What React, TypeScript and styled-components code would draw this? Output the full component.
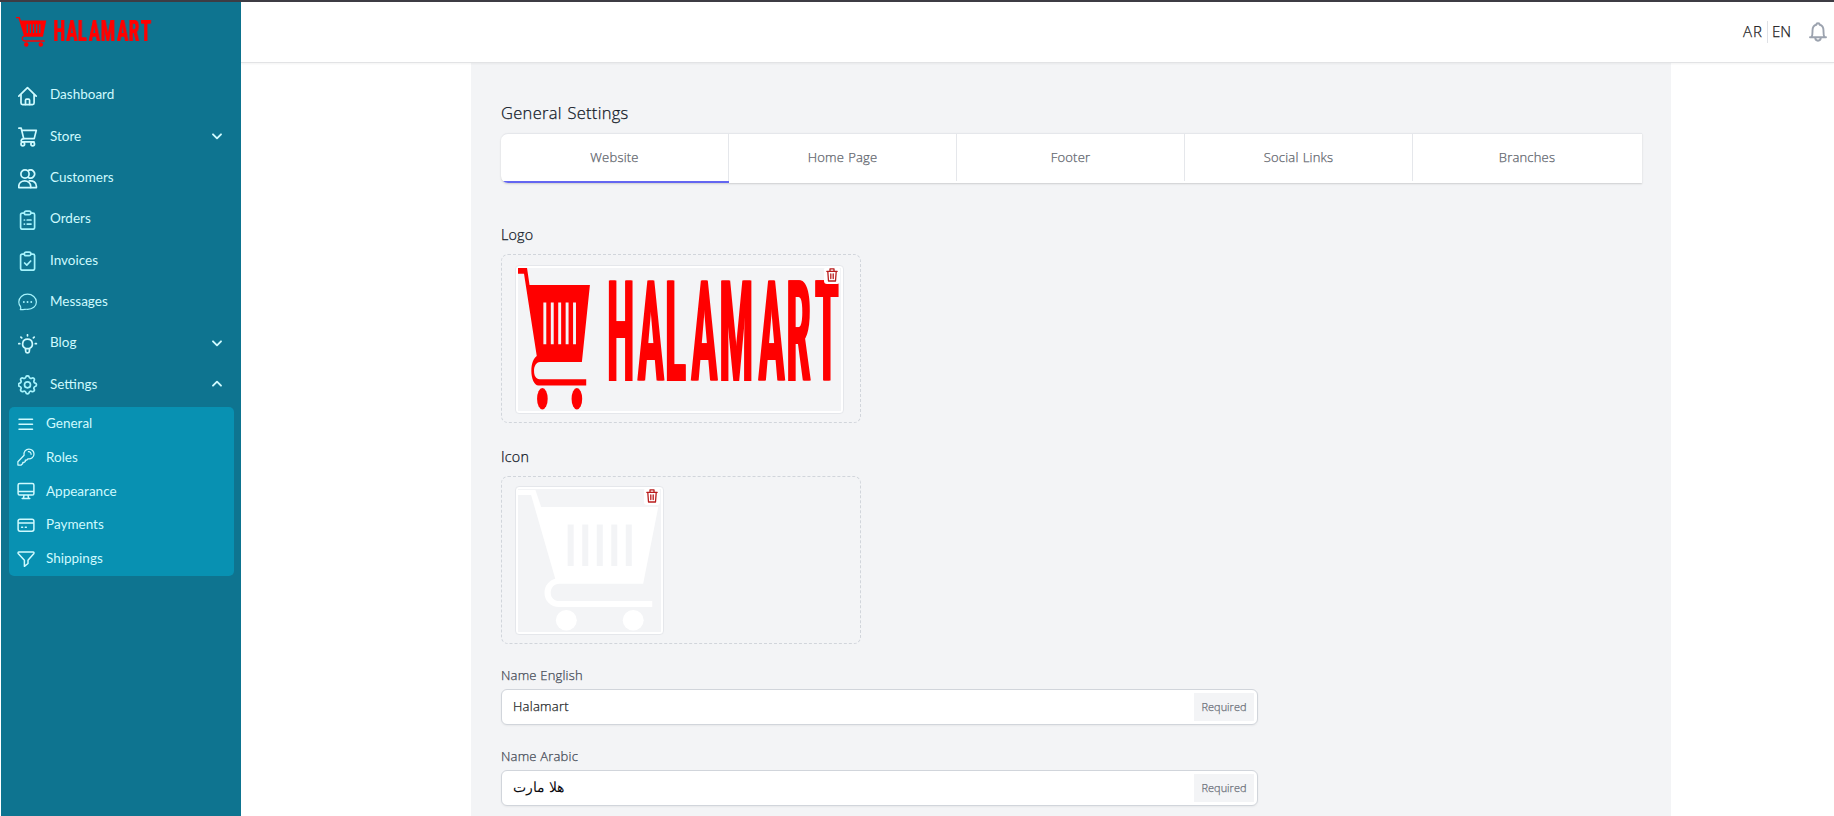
import React from "react";
import styled, { createGlobalStyle } from "styled-components";

const GlobalStyle = createGlobalStyle`
  * { box-sizing: border-box; }
  body {
    margin: 0;
    background: #fff;
    color: #111827;
    font-family: Lato, "Open Sans", sans-serif;
    overflow: hidden;
  }
`;

/* ---------- layout ---------- */

const Page = styled.div`
  height: 816px;
  display: flex;
  flex-direction: column;
  border-top: 2px solid #3d3c44;
  overflow: hidden;
`;

const Shell = styled.div`
  flex: 1;
  min-height: 0;
  display: flex;
  padding-left: 1px;
`;

const Sidebar = styled.aside`
  width: 240px;
  flex: none;
  background: #0e7490;
  color: #cffafe;
`;

const Brand = styled.div`
  height: 72.3px;
  padding: 15px 0 0 15px;
`;

const NavRow = styled.div`
  height: 41.3px;
  padding: 0 14.5px 0 17px;
  display: flex;
  align-items: center;
  font-size: 13.5px;
`;

const NavIcon = styled.svg<{ $soft?: boolean }>`
  width: 20px;
  height: 20px;
  flex: none;
  margin: 2px 12px 0 0;
  fill: none;
  stroke: ${(p) => (p.$soft ? "#a5f3fc" : "#cffafe")};
  stroke-width: 1.7;
  stroke-linecap: round;
  stroke-linejoin: round;
`;

const NavLabel = styled.span`
  flex: 1;
  line-height: 20px;
  margin-bottom: 1px;
`;

const Chevron = styled.svg<{ $up?: boolean }>`
  width: 20px;
  height: 20px;
  fill: none;
  stroke: #cffafe;
  stroke-width: 1.9;
  stroke-linecap: round;
  stroke-linejoin: round;
  transform: ${(p) => (p.$up ? "rotate(180deg)" : "none")};
`;

const SubMenu = styled.div`
  margin: 2px 7px 0 8px;
  padding-bottom: 1px;
  background: #0891b2;
  border-radius: 5px;
`;

const SubRow = styled.div`
  height: 33.75px;
  padding-left: 7.5px;
  display: flex;
  align-items: center;
  font-size: 13.5px;
`;

const SubIcon = styled(NavIcon)`
  width: 18px;
  height: 18px;
  margin: 0 11.5px 0 0;
  stroke-width: 1.5;
`;

const Main = styled.div`
  flex: 1;
  min-width: 0;
  display: flex;
  flex-direction: column;
  font-family: "Open Sans", sans-serif;
  font-weight: 300;
  -webkit-text-stroke: 0.25px currentColor;
`;

const Header = styled.header`
  height: 60.5px;
  flex: none;
  display: flex;
  align-items: center;
  justify-content: flex-end;
  padding-right: 6px;
  border-bottom: 1px solid #e2e3e5;
  box-shadow: 0 1px 2px rgba(0, 0, 0, 0.05);
  background: #fff;
  position: relative;
`;

const Lang = styled.span<{ $first?: boolean }>`
  height: 22px;
  line-height: 20px;
  font-size: 15px;
  letter-spacing: ${(p) => (p.$first ? "1px" : "0")};
  color: #18181b;
  padding: ${(p) => (p.$first ? "0 4px 0 0" : "0 0 0 4px")};
  border-right: ${(p) => (p.$first ? "1px solid #e0e2e6" : "none")};
`;

const BellIcon = styled.svg`
  width: 20px;
  height: 22px;
  margin-left: 17px;
  fill: none;
  stroke: #9ca3af;
  stroke-width: 1.9;
  stroke-linecap: round;
  stroke-linejoin: round;
`;

const Content = styled.main`
  width: 1200px;
  flex: 1;
  margin-left: 230px;
  padding: 39px 30px 0;
  background: #f3f4f6;
`;

const Title = styled.h1`
  margin: 0 0 9px;
  font-size: 16.5px;
  line-height: 22px;
  font-weight: 300;
  letter-spacing: 0.3px;
  word-spacing: 1px;
`;

const Tabs = styled.div`
  height: 50px;
  width: 1141px;
  display: grid;
  grid-template-columns: repeat(4, 228px) 1fr;
  background: #fff;
  border-top: 1px solid #e5e7eb;
  border-radius: 7px 0 0 7px;
  box-shadow: 0 1px 2px rgba(0, 0, 0, 0.16);
  overflow: hidden;
`;

const Tab = styled.div<{ $active?: boolean }>`
  display: flex;
  align-items: center;
  justify-content: center;
  padding-right: 1px;
  color: #60646c;
  font-size: 13px;
  letter-spacing: 0.2px;
  word-spacing: 0.5px;
  border-bottom: 2px solid ${(p) => (p.$active ? "#6366f1" : "transparent")};
  &:not(:last-child) { box-shadow: inset -1px 0 0 #e5e7eb; }
`;

const SectionLabel = styled.h2<{ $gap: number }>`
  margin: ${(p) => p.$gap}px 0 9px;
  font-size: 14.3px;
  line-height: 20px;
  font-weight: 300;
  letter-spacing: 0.2px;
`;

const DropZone = styled.div<{ $short?: boolean }>`
  width: 360px;
  height: ${(p) => (p.$short ? "168px" : "169px")};
  padding: ${(p) => (p.$short ? "9px" : "10px")} 12.5px;
  border: 1px dashed #d1d5db;
  border-radius: 7px;
`;

const Preview = styled.div<{ $wide?: boolean }>`
  position: relative;
  width: ${(p) => (p.$wide ? "329px" : "149px")};
  height: 149px;
  padding: 2px;
  background: #fff;
  border: 1px solid #e5e7eb;
  border-radius: 4px;
`;

const Picture = styled.div`
  width: 100%;
  height: 100%;
  background: #f3f4f6;
  svg { display: block; overflow: visible; }
`;

const DeleteButton = styled.button<{ $right: number }>`
  position: absolute;
  top: 1px;
  right: ${(p) => p.$right}px;
  width: 16px;
  height: 17px;
  padding: 0 0 0 2px;
  border: 0;
  border-radius: 3px;
  background: #fff;
  svg {
    display: block;
    width: 12px;
    height: 14px;
    fill: none;
    stroke: #b91c1c;
    stroke-width: 1.3;
    stroke-linejoin: round;
    stroke-linecap: round;
  }
`;

const Field = styled.label<{ $gap: number }>`
  display: block;
  width: 757px;
  margin-top: ${(p) => p.$gap}px;
  font-size: 13px;
  line-height: 18px;
  letter-spacing: 0.2px;
  color: #434955;
`;

const InputBox = styled.div`
  height: 36px;
  margin-top: 5px;
  padding: 0 3px 0 11px;
  display: flex;
  align-items: center;
  background: #fff;
  border: 1px solid #d1d5db;
  border-radius: 6px;
  box-shadow: 0 1px 2px rgba(0, 0, 0, 0.05);
`;

const Value = styled.span<{ $arabic?: boolean }>`
  flex: 1;
  margin-bottom: 1px;
  color: ${(p) => (p.$arabic ? "#0b0b10" : "#1c1f26")};
  font-family: ${(p) => (p.$arabic ? '"DejaVu Sans", sans-serif' : "inherit")};
  font-size: ${(p) => (p.$arabic ? "13.8px" : "13px")};
  letter-spacing: ${(p) => (p.$arabic ? "0" : "0.25px")};
  -webkit-text-stroke: ${(p) => (p.$arabic ? "0" : "0.25px currentColor")};
`;

const Required = styled.span`
  width: 60px;
  height: 28px;
  display: flex;
  align-items: center;
  justify-content: center;
  background: #f3f4f6;
  color: #6b7079;
  font-size: 11px;
  letter-spacing: 0;
`;

/* ---------- drawings ---------- */

const LogoArt = ({ width, height }: { width: number; height: number }) => (
  <svg width={width} height={height} viewBox="0 0 322 144" preserveAspectRatio="none" overflow="visible" fill="#f00">
    <path
      fillRule="evenodd"
      d="M0 0H9L11.5 17H71.7L63.7 94.7H22C18 95 16 99 16 103.7S18 112 21.500 112H68V118.300H20.500C16 118.300 13.300 111 13.300 103.700C13.300 96 15.500 91 18.700 88.700L6 5.700H0Z
      M25.300 34.700V76.700H28.200V34.700Z M32.700 34.700V76.700H35.600V34.700Z M40.100 34.700V76.700H43V34.700Z M47.500 34.700V76.700H50.400V34.700Z M54.900 34.700V76.700H57.800V34.700Z"
    />
    <ellipse cx="24.3" cy="131.700" rx="5.300" ry="10.800" />
    <ellipse cx="58.700" cy="131.700" rx="5.300" ry="10.800" />
    <g filter="drop-shadow(1.2px 0 0 #f00)">
      <text
        transform="scale(.32 1)"
        y="113.700"
        x="275 370 456 537 625 746 833 922"
        fontFamily="'Roboto Condensed', Roboto, sans-serif"
        fontWeight="700"
        fontSize="142"
        stroke="none"
      >
        HALAMART
      </text>
    </g>
  </svg>
);

const CartArt = () => (
  <svg width="143" height="143" viewBox="0 0 142 143.500" preserveAspectRatio="none" fill="#fff">
    <path
      fillRule="evenodd"
      d="M0 1H17.300L23 18H139.300L124.300 95H41C36 95 32.500 99 32.500 104S36 112.500 41 112.500H133.300V118.300H41C32 118.300 26.300 112 26.300 104C26.300 97 31 91.500 37 90L13 6H0Z
      M49.300 35.700V77.300H55.300V35.700Z M63.800 35.700V77.300H69.800V35.700Z M78.200 35.700V77.300H84.200V35.700Z M92.600 35.700V77.300H98.600V35.700Z M107 35.700V77.300H113V35.700Z"
    />
    <circle cx="48" cy="131.700" r="10.400" />
    <circle cx="114.400" cy="131.700" r="10.400" />
  </svg>
);

const TrashArt = () => (
  <svg viewBox="0 0 12 14">
    <path d="M.8 3.300H11.200M4 3.200V.8H8V3.200M1.800 3.500L2.500 13H9.500L10.200 3.500M4.800 5.800V10.600M7.200 5.800V10.600" />
  </svg>
);

const clipboard = (
  <>
    <path d="M6.300 3.200H4.200Q2.600 3.200 2.600 4.800V17.600Q2.600 19.200 4.200 19.200H15Q16.600 19.200 16.600 17.600V4.800Q16.600 3.200 15 3.200H12.900" />
    <rect x="6.300" y="1.200" width="6.600" height="3.500" rx="1.700" />
  </>
);

const icons: Record<string, React.ReactNode> = {
  home: (
    <>
      <path d="M.8 10.200L9.500 1.600L18.200 10.200" />
      <path d="M3 8.800V17Q3 18.600 4.600 18.600H14.500Q16.100 18.600 16.100 17V8.800" />
      <path d="M7.500 18.400V14.300Q7.500 13.200 8.600 13.200H10.500Q11.600 13.200 11.600 14.300V18.400" />
    </>
  ),
  cart: (
    <>
      <path d="M.8 1.200H3.200L5.700 11.600H16.200L18.300 3.400H3.900" />
      <path d="M5.600 11.600C2.800 12 2.200 14.900 4.800 14.900H16" />
      <circle cx="4.800" cy="17" r="1.800" />
      <circle cx="14.700" cy="17" r="1.800" />
    </>
  ),
  users: (
    <>
      <circle cx="7" cy="5" r="4.100" />
      <path d="M10.300 1.500A4.100 4.100 0 1 1 10.300 8.500" />
      <path d="M.8 18.600V17.200C.8 14 3.500 11.800 6.700 11.800S12.700 14 12.700 17.200V18.600Z" />
      <path d="M11.300 11.900C15.300 11.200 18.400 13.800 18.400 17.200V18.600H12.900" />
    </>
  ),
  orders: (
    <>
      {clipboard}
      <path d="M6.300 10H6.500M9.200 10H13M6.300 14.100H6.500M9.200 14.100H13" />
    </>
  ),
  invoices: (
    <>
      {clipboard}
      <path d="M6.600 12L8.800 14.200L12.700 10" />
    </>
  ),
  messages: (
    <>
      <path
        strokeWidth="1.200"
        d="M2.300 17.600C3 16.500 3 15.600 2.500 14.500C1.400 13.200.8 11.700.8 10C.8 5.600 4.700 2.200 9.500 2.200S18.400 5.600 18.400 10S14.500 17.300 9.500 17.300C7.400 17 6 17.800 2.300 17.600Z"
      />
      <path strokeWidth="1.800" d="M5.800 10H5.900M9.500 10H9.600M13.200 10H13.300" />
    </>
  ),
  blog: (
    <>
      <path d="M7.300 14.200C3.200 12.400 3.800 5.200 9.500 5.200S15.800 12.400 11.700 14.200L11.200 17.800Q11 18.900 9.500 18.900T7.800 17.800ZM7.500 14.700H11.500" />
      <path d="M9.500 .8V1.800M.7 9.700H1.800M17.300 9.700H18.400M2.900 3.100L3.700 3.900M16.200 3.100L15.400 3.900" />
    </>
  ),
  settings: (
    <path
      transform="translate(-2.500 -2.200)"
      d="M10.325 4.317c.426-1.756 2.924-1.756 3.350 0a1.724 1.724 0 002.573 1.066c1.543-.94 3.310.826 2.370 2.370a1.724 1.724 0 001.065 2.572c1.756.426 1.756 2.924 0 3.350a1.724 1.724 0 00-1.066 2.573c.94 1.543-.826 3.310-2.370 2.370a1.724 1.724 0 00-2.572 1.065c-.426 1.756-2.924 1.756-3.350 0a1.724 1.724 0 00-2.573-1.066c-1.543.94-3.310-.826-2.370-2.370a1.724 1.724 0 00-1.065-2.572c-1.756-.426-1.756-2.924 0-3.350a1.724 1.724 0 001.066-2.573c-.94-1.543.826-3.310 2.370-2.370.996.608 2.296.07 2.572-1.065zM15 12a3 3 0 11-6 0 3 3 0 016 0z"
    />
  ),
  general: <path d="M2 4.200H15.500M2 9.200H15.500M2 14.200H15.500" />,
  roles: (
    <path
      strokeWidth="1.250"
      d="M7.100 7.300C6.400 3.800 8.700 1 11.900 1C14.800 1 17 3.300 17 6C17 9.300 14.200 11.400 10.900 10.800L9.800 12H8.300V13.500L7.200 14.300H5.800V15.500L4.200 17H.9V13.700ZM11.400 3.600C13 3.400 14.200 4.800 14.100 6.300"
    />
  ),
  appearance: (
    <path d="M2.700 1.500H15.300Q16.900 1.500 16.900 3.100V11.400Q16.900 13 15.300 13H2.700Q1.100 13 1.100 11.400V3.100Q1.100 1.500 2.700 1.500ZM1.100 9.600H16.900M7 13.200L6.500 16.200M11 13.200L11.500 16.200M5.200 16.500H12.800" />
  ),
  payments: (
    <path d="M3 3.200H15Q16.900 3.200 16.900 5.100V13.300Q16.900 15.200 15 15.200H3Q1.100 15.200 1.100 13.300V5.100Q1.100 3.200 3 3.200ZM1.100 7.100H16.900M4.600 11.300H5.600M8.300 11.300H9.300" />
  ),
  shippings: <path d="M2 2H16C17.100 2 17.200 3 16.700 3.700L11 10.200V13.500L7.400 16.300V10.200L1.400 3.700C.8 3 .9 2 2 2Z" />,
};

type NavEntry = { label: string; icon: string; soft?: boolean; menu?: "down" | "up" };

const nav: NavEntry[] = [
  { label: "Dashboard", icon: "home" },
  { label: "Store", icon: "cart", menu: "down" },
  { label: "Customers", icon: "users" },
  { label: "Orders", icon: "orders", soft: true },
  { label: "Invoices", icon: "invoices", soft: true },
  { label: "Messages", icon: "messages", soft: true },
  { label: "Blog", icon: "blog", menu: "down" },
  { label: "Settings", icon: "settings", soft: true, menu: "up" },
];

const subNav: NavEntry[] = [
  { label: "General", icon: "general" },
  { label: "Roles", icon: "roles" },
  { label: "Appearance", icon: "appearance" },
  { label: "Payments", icon: "payments" },
  { label: "Shippings", icon: "shippings" },
];

const tabs = ["Website", "Home Page", "Footer", "Social Links", "Branches"];

export default function App() {
  return (
    <Page>
      <GlobalStyle />
      <Shell>
        <Sidebar>
          <Brand>
            <LogoArt width={136} height={30} />
          </Brand>
          {nav.map((n) => (
            <NavRow key={n.label}>
              <NavIcon viewBox="0 0 20 20" $soft={n.soft}>
                {icons[n.icon]}
              </NavIcon>
              <NavLabel>{n.label}</NavLabel>
              {n.menu && (
                <Chevron viewBox="0 0 20 20" $up={n.menu === "up"}>
                  <path d="M6 8.300L10 12.300L14 8.300" />
                </Chevron>
              )}
            </NavRow>
          ))}
          <SubMenu>
            {subNav.map((n) => (
              <SubRow key={n.label}>
                <SubIcon viewBox="0 0 18 18">{icons[n.icon]}</SubIcon>
                <NavLabel>{n.label}</NavLabel>
              </SubRow>
            ))}
          </SubMenu>
        </Sidebar>
        <Main>
          <Header>
            <Lang $first>AR</Lang>
            <Lang>EN</Lang>
            <BellIcon viewBox="0 0 20 22">
              <path d="M2 16.200H18M3.600 16C4.600 14.500 4.500 12.500 4.500 9.500C4.500 6.200 6.200 4.200 8.400 3.700C8.400 1.700 11.600 1.700 11.600 3.700C13.800 4.200 15.500 6.200 15.500 9.500C15.500 12.500 15.400 14.500 16.400 16M7.200 16.600C7.200 20.700 12.800 20.700 12.800 16.600" />
            </BellIcon>
          </Header>
          <Content>
            <Title>General Settings</Title>
            <Tabs>
              {tabs.map((t, i) => (
                <Tab key={t} $active={i === 0}>
                  {t}
                </Tab>
              ))}
            </Tabs>
            <SectionLabel $gap={42}>Logo</SectionLabel>
            <DropZone>
              <Preview $wide>
                <Picture>
                  <LogoArt width={323} height={143} />
                </Picture>
                <DeleteButton $right={3} aria-label="Delete logo">
                  <TrashArt />
                </DeleteButton>
              </Preview>
            </DropZone>
            <SectionLabel $gap={24}>Icon</SectionLabel>
            <DropZone $short>
              <Preview>
                <Picture>
                  <CartArt />
                </Picture>
                <DeleteButton $right={3} aria-label="Delete icon">
                  <TrashArt />
                </DeleteButton>
              </Preview>
            </DropZone>
            <Field $gap={22}>
              Name English
              <InputBox>
                <Value>Halamart</Value>
                <Required>Required</Required>
              </InputBox>
            </Field>
            <Field $gap={22}>
              Name Arabic
              <InputBox>
                <Value $arabic>هلا مارت</Value>
                <Required>Required</Required>
              </InputBox>
            </Field>
          </Content>
        </Main>
      </Shell>
    </Page>
  );
}
